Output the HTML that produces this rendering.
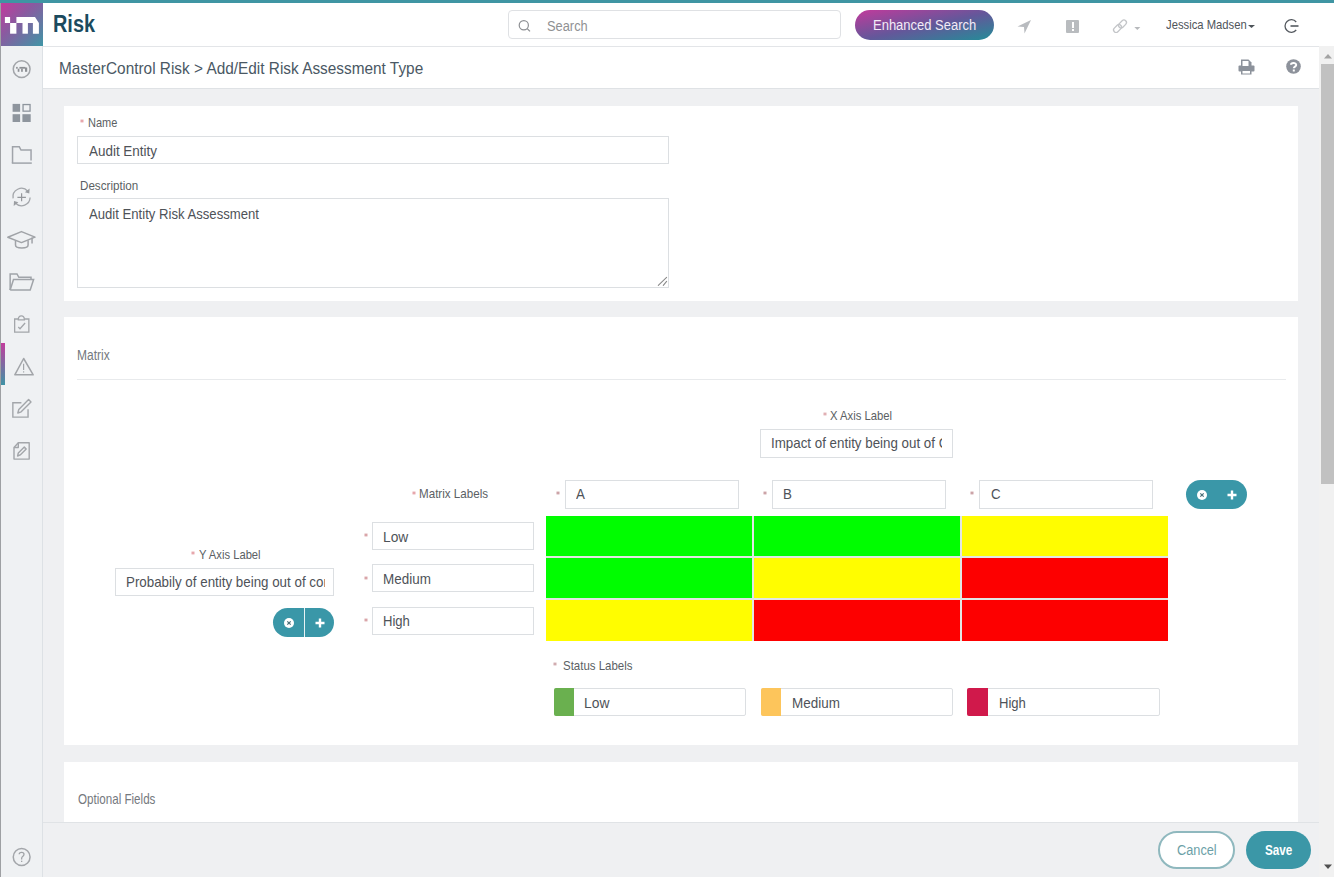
<!DOCTYPE html>
<html><head><meta charset="utf-8">
<style>
*{box-sizing:border-box;margin:0;padding:0}
html,body{width:1334px;height:877px;overflow:hidden;background:#eff0f2;font-family:"Liberation Sans",sans-serif;position:relative}
.a{position:absolute}
.t{position:absolute;white-space:nowrap;transform-origin:0 0;line-height:1}
.inp{position:absolute;background:#fff;border:1px solid #dcdfe2}
.cell{position:absolute;width:206px;height:40px}
.g{background:#00fd00}.y{background:#fffd00}.r{background:#fd0000}
.btng{position:absolute;width:61px;height:29px;border-radius:15px;background:#3a97a8}
.ic{position:absolute}
</style></head><body>
<!-- top teal strip -->
<div class="a" style="left:0;top:0;width:1334px;height:3px;background:#3f95a3"></div>
<!-- header -->
<div class="a" style="left:0;top:3px;width:1334px;height:44px;background:#fff;border-bottom:1px solid #e3e5e8"></div>
<!-- logo -->
<div class="a" style="left:1px;top:3px;width:42px;height:42.5px;background:linear-gradient(135deg,#c43a9c 0%,#8a5aa0 40%,#3f96a6 100%)"></div>
<svg class="a" style="left:0;top:0" width="45" height="46" viewBox="0 0 45 46">
 <g fill="#fff">
  <rect x="4.9" y="17" width="5.2" height="6"/>
  <rect x="10.1" y="23" width="6.3" height="10.7"/>
  <rect x="22.5" y="23" width="5.4" height="10.7"/>
  <path d="M16.4 17 H35 L38.9 23 V33.7 H32.9 V23 H16.4 Z"/>
 </g>
</svg>
<div class="t" style="left:52.60px;top:12.00px;font-size:24.78px;color:#1b4a5e;transform:scaleX(0.8033);font-weight:bold">Risk</div>

<!-- search -->
<div class="a" style="left:508px;top:10px;width:333px;height:29px;border:1px solid #dfe1e4;border-radius:4px;background:#fff"></div>
<svg class="ic" style="left:517px;top:18px" width="16" height="16" viewBox="0 0 16 16"><circle cx="6.8" cy="7.2" r="4.6" fill="none" stroke="#8d8f93" stroke-width="1.2"/><path d="M10.2 10.6 L13 13.4" stroke="#8d8f93" stroke-width="1.3"/></svg>
<div class="t" style="left:546.70px;top:18.00px;font-size:15.22px;color:#8f9193;transform:scaleX(0.8439)">Search</div>

<!-- enhanced search -->
<div class="a" style="left:855px;top:10px;width:139px;height:30px;border-radius:15px;background:linear-gradient(to bottom right,#c23a9c 0%,#64579a 52%,#238d98 100%)"></div>
<div class="t" style="left:872.74px;top:17.00px;font-size:15.07px;color:#f4eaf6;transform:scaleX(0.8617)">Enhanced Search</div>

<!-- header icons -->
<svg class="ic" style="left:1016px;top:19px" width="16" height="16" viewBox="0 0 16 16"><path d="M1.5 7.5 L15 1 L8.5 14.5 L8 8 Z" fill="#b8bbbf"/></svg>
<div class="a" style="left:1066px;top:20px;width:13px;height:13px;background:#b9bcbf;border-radius:1px"></div>
<div class="a" style="left:1071.5px;top:22px;width:2px;height:6px;background:#fff"></div>
<div class="a" style="left:1071.5px;top:29px;width:2px;height:2px;background:#fff"></div>
<svg class="ic" style="left:1111px;top:18px" width="18" height="17" viewBox="0 0 18 17"><g fill="none" stroke="#c3c5c8" stroke-width="1.3"><rect x="2" y="8" width="9" height="5" rx="2.5" transform="rotate(-45 6.5 10.5)"/><rect x="7" y="3.5" width="9" height="5" rx="2.5" transform="rotate(-45 11.5 6)"/></g></svg>
<svg class="ic" style="left:1134px;top:26.5px" width="7" height="4" viewBox="0 0 7 4"><path d="M0.3 0 L6.3 0 L3.3 3Z" fill="#b7b9bc"/></svg>
<div class="t" style="left:1166.00px;top:19.00px;font-size:12.17px;color:#4f555b;transform:scaleX(0.9259)">Jessica Madsen</div>
<svg class="ic" style="left:1248px;top:24.5px" width="7" height="4" viewBox="0 0 7 4"><path d="M0 0 L7 0 L3.5 3Z" fill="#4d5359"/></svg>
<svg class="ic" style="left:1283px;top:18px" width="17" height="16" viewBox="0 0 17 16"><path d="M13.2 4 A6.3 6.3 0 1 0 13.2 12" fill="none" stroke="#555a60" stroke-width="1.3"/><path d="M7.5 8 L15.5 8" stroke="#555a60" stroke-width="1.6"/></svg>

<!-- sidebar -->
<div class="a" style="left:0;top:45.5px;width:43px;height:832px;background:#eff1f3;border-right:1px solid #dde1e5"></div>
<div class="a" style="left:0;top:3px;width:1px;height:874px;background:#9ea0a3"></div>
<div class="a" style="left:1px;top:343px;width:4px;height:42px;background:linear-gradient(180deg,#c23d9d,#3f93a5)"></div>
<svg class="ic" style="left:0;top:0" width="43" height="877" viewBox="0 0 43 877">
 <g fill="none" stroke="#a2a5a9" stroke-width="1.5">
  <circle cx="21.65" cy="69.1" r="8.4"/>
 </g>
 <g fill="#8d9094">
  <rect x="16.1" y="66.9" width="1.6" height="1.8"/>
  <rect x="17.7" y="68.7" width="1.7" height="3.1"/>
  <rect x="19.4" y="66.9" width="6" height="1.8"/>
  <rect x="21.1" y="68.7" width="1.7" height="3.1"/>
  <rect x="25" y="67.5" width="2.2" height="4.3"/>
 </g>
 <g fill="#8e959d">
  <rect x="12.6" y="103.9" width="7.5" height="7.9"/>
  <rect x="12.6" y="114.2" width="7.5" height="7.8"/>
  <rect x="22.4" y="114.2" width="8.3" height="7.8"/>
 </g>
 <rect x="23.05" y="104.55" width="7" height="6.6" fill="none" stroke="#8e959d" stroke-width="1.3"/>
 <g fill="none" stroke="#a0a4aa" stroke-width="1.5" stroke-linejoin="miter">
  <path d="M12.55 163.1 V146.85 H19.3 L21 150.05 H31.05 V160.6"/>
  <path d="M11.8 163.1 H31.8"/>
 </g>
 <g fill="none" stroke="#a3a6aa" stroke-width="1.3">
  <path d="M13.1 198.4 A8.5 8.5 0 0 1 27.8 191.2"/>
  <path d="M30.1 197.5 A8.5 8.5 0 0 1 15.6 203.2"/>
  <path d="M17.4 197.3 H25.9 M21.6 193.3 V201.3" stroke="#95989c" stroke-width="1.2"/>
 </g>
 <g fill="#9a9da1">
  <path d="M29.6 188.6 L29.3 193.6 L24.9 192.3Z"/>
  <path d="M13.7 206 L14 201 L18.4 202.3Z"/>
 </g>
 <g fill="none" stroke="#a0a3a7" stroke-width="1.5" stroke-linejoin="round">
  <path d="M7.8 237.3 L21.45 231.6 L35 237.1 L21.45 242.6 Z"/>
  <path d="M15.5 240.4 V245 Q15.5 248 21.8 248 Q28.1 248 28.1 245 V240.2"/>
  <path d="M32.05 237.5 V243.5"/>
 </g>
 <g fill="none" stroke="#a0a4a9" stroke-width="1.5" stroke-linejoin="miter">
  <path d="M10.15 290 V273.95 H17 L18.8 277.3 H31 V279"/>
  <path d="M10.15 290 L13.5 279.5 H33.6 L30.2 289.9 H10.15Z"/>
 </g>
 <g fill="none" stroke="#a3a6aa" stroke-width="1.3">
  <path d="M18 319 H14.65 V332.15 H28.85 V319 H24.7"/>
  <path d="M18.3 319.8 Q18.3 315.8 21.35 315.8 Q24.4 315.8 24.4 319.8 Z"/>
  <path d="M18.3 327 L20 328.7 L25.1 323"/>
 </g>
 <g fill="none" stroke="#a2a5a9" stroke-width="1.5" stroke-linejoin="round">
  <path d="M23.65 358.5 L33.2 374.8 H14.8 Z"/>
  <path d="M23.6 363.8 V369.9" stroke-width="1.2"/>
 </g>
 <rect x="23" y="371.3" width="1.2" height="1.2" fill="#a2a5a9"/>
 <g fill="none" stroke="#a3a6aa" stroke-width="1.4">
  <path d="M21.4 402.7 H12.85 V417.1 H28.05 V409.3"/>
  <path d="M17.8 413 L18.8 409.4 L28.6 399.6 L31 402 L21.2 411.8 Z" stroke-linejoin="round"/>
 </g>
 <g fill="none" stroke="#a3a6aa" stroke-width="1.4" stroke-linejoin="round">
  <path d="M18.3 442.8 H29.2 V459.1 H14 V447.5 Z"/>
  <path d="M14 447.5 H18.3 V442.8"/>
  <path d="M17.6 456 L18.3 453 L24.3 447 L26.2 448.9 L20.2 454.9 Z"/>
 </g>
 <circle cx="21.65" cy="857" r="8.4" fill="none" stroke="#a3a6aa" stroke-width="1.5"/>
 <path d="M19.2 854.3 Q19.2 852.3 21.6 852.3 Q24 852.3 24 854.3 Q24 855.8 22.3 856.8 Q21.6 857.3 21.6 859.4" fill="none" stroke="#a0a3a7" stroke-width="1.3"/>
 <rect x="21" y="860.7" width="1.3" height="1.3" fill="#a0a3a7"/>
</svg>


<!-- breadcrumb bar -->
<div class="a" style="left:43px;top:47px;width:1276px;height:42px;background:#fff;border-bottom:1px solid #dfe2e5"></div>
<div class="t" style="left:59.32px;top:60.00px;font-size:17.39px;color:#4a5864;transform:scaleX(0.8850)">MasterControl Risk &gt; Add/Edit Risk Assessment Type</div>
<svg class="ic" style="left:1238px;top:59px" width="17" height="16" viewBox="0 0 17 16"><g fill="#8c929b"><path d="M3 0.5 L10.5 0.5 L13.5 3.5 L13.5 7 L3 7Z"/><rect x="0.5" y="6.5" width="16" height="6" rx="1"/><rect x="3" y="11" width="10.5" height="4.5"/></g><rect x="4.5" y="2" width="6" height="5" fill="#fff"/><rect x="4.5" y="12" width="7.5" height="2.5" fill="#fff"/></svg>
<svg class="ic" style="left:1286px;top:59px" width="16" height="16" viewBox="0 0 16 16"><circle cx="7.5" cy="7.5" r="7.3" fill="#8d929b"/><path d="M5 5.8 C5 3.6 10.2 3.3 10.2 6 C10.2 7.6 7.8 7.6 7.8 9.3" fill="none" stroke="#fff" stroke-width="2"/><rect x="6.8" y="10.5" width="2" height="2" fill="#fff"/></svg>

<!-- CARD 1 -->
<div class="a" style="left:64px;top:106px;width:1234px;height:195px;background:#fff"></div>
<svg class="ic" style="left:80px;top:118.5px" width="4" height="4" viewBox="0 0 4 4"><path d="M2 0.2V3.8M0.3 1.1L3.7 2.9M3.7 1.1L0.3 2.9" stroke="#e39aa0" stroke-width="0.9"/></svg>
<div class="t" style="left:87.60px;top:117.00px;font-size:12.10px;color:#5b5f64;transform:scaleX(0.9098)">Name</div>
<div class="inp" style="left:77px;top:136px;width:592px;height:28px"></div>
<div class="t" style="left:88.90px;top:143.00px;font-size:15.00px;color:#4e5258;transform:scaleX(0.8956)">Audit Entity</div>
<div class="t" style="left:80.00px;top:180.00px;font-size:12.10px;color:#5b5f64;transform:scaleX(0.9621)">Description</div>
<div class="inp" style="left:77px;top:198px;width:592px;height:90px"></div>
<div class="t" style="left:89.00px;top:206.00px;font-size:15.00px;color:#4e5258;transform:scaleX(0.8749)">Audit Entity Risk Assessment</div>
<svg class="ic" style="left:655px;top:274px" width="14" height="14" viewBox="0 0 14 14"><path d="M3.3 11.4 L11.6 3.3 M8.3 11.3 L11.6 7.4" stroke="#8a8a8a" stroke-width="1.1" stroke-linecap="round"/></svg>

<!-- CARD 2 -->
<div class="a" style="left:64px;top:317px;width:1234px;height:428px;background:#fff"></div>
<div class="t" style="left:76.81px;top:347.00px;font-size:15.20px;color:#75797e;transform:scaleX(0.7902)">Matrix</div>
<div class="a" style="left:77px;top:379px;width:1209px;height:1px;background:#e8eaec"></div>

<svg class="ic" style="left:823.3px;top:412px" width="4" height="4" viewBox="0 0 4 4"><path d="M2 0.2V3.8M0.3 1.1L3.7 2.9M3.7 1.1L0.3 2.9" stroke="#dca4a8" stroke-width="0.9"/></svg>
<div class="t" style="left:830.30px;top:410.00px;font-size:12.10px;color:#5b5f64;transform:scaleX(0.9318)">X Axis Label</div>
<div class="inp" style="left:760px;top:429px;width:193px;height:29px"></div>
<div class="a" style="left:0;top:0;width:942.00px;height:877px;overflow:hidden"><div class="t" style="left:770.51px;top:435.00px;font-size:15.00px;color:#4e5258;transform:scaleX(0.8900)">Impact of entity being out of Control</div></div>

<svg class="ic" style="left:412px;top:490.5px" width="4" height="4" viewBox="0 0 4 4"><path d="M2 0.2V3.8M0.3 1.1L3.7 2.9M3.7 1.1L0.3 2.9" stroke="#e39aa0" stroke-width="0.9"/></svg>
<div class="t" style="left:418.70px;top:488.00px;font-size:12.10px;color:#5b5f64;transform:scaleX(0.9600)">Matrix Labels</div>
<svg class="ic" style="left:556px;top:491px" width="4" height="4" viewBox="0 0 4 4"><path d="M2 0.2V3.8M0.3 1.1L3.7 2.9M3.7 1.1L0.3 2.9" stroke="#c4959a" stroke-width="0.9"/></svg>
<div class="inp" style="left:564.5px;top:479.5px;width:174px;height:29px"></div>
<div class="t" style="left:576.20px;top:486.00px;font-size:15.00px;color:#4e5258;transform:scaleX(0.8900)">A</div>
<svg class="ic" style="left:763px;top:491px" width="4" height="4" viewBox="0 0 4 4"><path d="M2 0.2V3.8M0.3 1.1L3.7 2.9M3.7 1.1L0.3 2.9" stroke="#c4959a" stroke-width="0.9"/></svg>
<div class="inp" style="left:772px;top:479.5px;width:174px;height:29px"></div>
<div class="t" style="left:783.11px;top:486.00px;font-size:15.00px;color:#4e5258;transform:scaleX(0.8900)">B</div>
<svg class="ic" style="left:970px;top:491px" width="4" height="4" viewBox="0 0 4 4"><path d="M2 0.2V3.8M0.3 1.1L3.7 2.9M3.7 1.1L0.3 2.9" stroke="#c4959a" stroke-width="0.9"/></svg>
<div class="inp" style="left:979px;top:479.5px;width:174px;height:29px"></div>
<div class="t" style="left:991.00px;top:486.00px;font-size:15.00px;color:#4e5258;transform:scaleX(0.8900)">C</div>
<div class="btng" style="left:1186px;top:479.5px"></div>
<svg class="ic" style="left:1196px;top:489px" width="12" height="12" viewBox="0 0 12 12"><circle cx="6" cy="6" r="5" fill="#fff"/><path d="M4.3 4.3L7.7 7.7M7.7 4.3L4.3 7.7" stroke="#4a6f78" stroke-width="1.2"/></svg>
<svg class="ic" style="left:1227px;top:490px" width="10" height="10" viewBox="0 0 10 10"><path d="M5 0.5V9.5M0.5 5H9.5" stroke="#fff" stroke-width="2.4"/></svg>

<!-- matrix -->
<div class="a" style="left:546px;top:516px;width:622px;height:125px;background:#e2e6e2"></div>
<div class="cell g" style="left:546px;top:516px"></div>
<div class="cell g" style="left:754px;top:516px"></div>
<div class="cell y" style="left:962px;top:516px"></div>
<div class="cell g" style="left:546px;top:558px"></div>
<div class="cell y" style="left:754px;top:558px"></div>
<div class="cell r" style="left:962px;top:558px"></div>
<div class="cell y" style="left:546px;top:600px;height:41px"></div>
<div class="cell r" style="left:754px;top:600px;height:41px"></div>
<div class="cell r" style="left:962px;top:600px;height:41px"></div>

<svg class="ic" style="left:363.5px;top:533px" width="4" height="4" viewBox="0 0 4 4"><path d="M2 0.2V3.8M0.3 1.1L3.7 2.9M3.7 1.1L0.3 2.9" stroke="#d4979c" stroke-width="0.9"/></svg>
<div class="inp" style="left:372px;top:522px;width:162px;height:28px"></div>
<div class="t" style="left:382.68px;top:529.00px;font-size:15.00px;color:#4e5258;transform:scaleX(0.9181)">Low</div>
<svg class="ic" style="left:363.5px;top:575.5px" width="4" height="4" viewBox="0 0 4 4"><path d="M2 0.2V3.8M0.3 1.1L3.7 2.9M3.7 1.1L0.3 2.9" stroke="#d4979c" stroke-width="0.9"/></svg>
<div class="inp" style="left:372px;top:564px;width:162px;height:28px"></div>
<div class="t" style="left:382.70px;top:571.00px;font-size:15.00px;color:#4e5258;transform:scaleX(0.8967)">Medium</div>
<svg class="ic" style="left:363.5px;top:618px" width="4" height="4" viewBox="0 0 4 4"><path d="M2 0.2V3.8M0.3 1.1L3.7 2.9M3.7 1.1L0.3 2.9" stroke="#d4979c" stroke-width="0.9"/></svg>
<div class="inp" style="left:372px;top:606.5px;width:162px;height:28px"></div>
<div class="t" style="left:382.73px;top:613.00px;font-size:15.00px;color:#4e5258;transform:scaleX(0.8710)">High</div>

<svg class="ic" style="left:191.2px;top:550.5px" width="4" height="4" viewBox="0 0 4 4"><path d="M2 0.2V3.8M0.3 1.1L3.7 2.9M3.7 1.1L0.3 2.9" stroke="#e39aa0" stroke-width="0.9"/></svg>
<div class="t" style="left:199.20px;top:549.00px;font-size:12.10px;color:#5b5f64;transform:scaleX(0.9288)">Y Axis Label</div>
<div class="inp" style="left:115px;top:567.5px;width:219px;height:28px"></div>
<div class="a" style="left:0;top:0;width:324.50px;height:877px;overflow:hidden"><div class="t" style="left:126.01px;top:574.00px;font-size:15.00px;color:#4e5258;transform:scaleX(0.8900)">Probabily of entity being out of control</div></div>
<div class="btng" style="left:273px;top:608px;height:29px"></div>
<div class="a" style="left:303.5px;top:608px;width:1px;height:29px;background:#e9f3f5"></div>
<svg class="ic" style="left:283px;top:616.5px" width="12" height="12" viewBox="0 0 12 12"><circle cx="6" cy="6" r="5" fill="#fff"/><path d="M4.3 4.3L7.7 7.7M7.7 4.3L4.3 7.7" stroke="#4a6f78" stroke-width="1.2"/></svg>
<svg class="ic" style="left:314.5px;top:617.5px" width="10" height="10" viewBox="0 0 10 10"><path d="M5 0.5V9.5M0.5 5H9.5" stroke="#fff" stroke-width="2.4"/></svg>

<svg class="ic" style="left:553.4px;top:661.5px" width="4" height="4" viewBox="0 0 4 4"><path d="M2 0.2V3.8M0.3 1.1L3.7 2.9M3.7 1.1L0.3 2.9" stroke="#c9a0a4" stroke-width="0.9"/></svg>
<div class="t" style="left:563.20px;top:660.00px;font-size:12.10px;color:#5b5f64;transform:scaleX(0.9490)">Status Labels</div>
<div class="inp" style="left:553.5px;top:688px;width:192.5px;height:27.5px;border-radius:2px"></div>
<div class="a" style="left:553.5px;top:688px;width:20.5px;height:27.5px;background:#6ab04f;border-radius:2px 0 0 2px"></div>
<div class="t" style="left:584.48px;top:695.00px;font-size:15.00px;color:#4e5258;transform:scaleX(0.9219)">Low</div>
<div class="inp" style="left:760.5px;top:688px;width:192.5px;height:27.5px;border-radius:2px"></div>
<div class="a" style="left:760.5px;top:688px;width:20.5px;height:27.5px;background:#fdc55b;border-radius:2px 0 0 2px"></div>
<div class="t" style="left:791.90px;top:695.00px;font-size:15.00px;color:#4e5258;transform:scaleX(0.8967)">Medium</div>
<div class="inp" style="left:967px;top:688px;width:193px;height:27.5px;border-radius:2px"></div>
<div class="a" style="left:967px;top:688px;width:21px;height:27.5px;background:#d0194b;border-radius:2px 0 0 2px"></div>
<div class="t" style="left:998.73px;top:695.00px;font-size:15.00px;color:#4e5258;transform:scaleX(0.8710)">High</div>

<!-- CARD 3 -->
<div class="a" style="left:64px;top:761.5px;width:1234px;height:61px;background:#fff"></div>
<div class="t" style="left:77.80px;top:791.00px;font-size:15.00px;color:#75797e;transform:scaleX(0.7735)">Optional Fields</div>

<!-- footer -->
<div class="a" style="left:43px;top:822px;width:1276px;height:55px;background:#eff0f2;border-top:1px solid #e0e3e6"></div>
<div class="a" style="left:1158px;top:831px;width:77px;height:37.5px;border-radius:19px;border:2px solid #8fb8be;background:#fff"></div>
<div class="t" style="left:1176.90px;top:842.00px;font-size:15.51px;color:#6c9fa7;transform:scaleX(0.8221)">Cancel</div>
<div class="a" style="left:1246px;top:831px;width:64.5px;height:37.5px;border-radius:19px;background:#3b97a7"></div>
<div class="t" style="left:1264.60px;top:842.00px;font-size:15.51px;color:#ffffff;transform:scaleX(0.7545);font-weight:bold">Save</div>

<!-- scrollbar -->
<div class="a" style="left:1319px;top:46px;width:15px;height:831px;background:#f1f1f1"></div>
<div class="a" style="left:1321px;top:64px;width:13px;height:420px;background:#c1c1c1"></div>
<svg class="ic" style="left:1323px;top:53px" width="10" height="6" viewBox="0 0 10 6"><path d="M1 5.5 L5 1 L9 5.5Z" fill="#a3a3a3"/></svg>
<svg class="ic" style="left:1323px;top:864px" width="10" height="6" viewBox="0 0 10 6"><path d="M1 0.5 L5 5 L9 0.5Z" fill="#505050"/></svg>
</body></html>
